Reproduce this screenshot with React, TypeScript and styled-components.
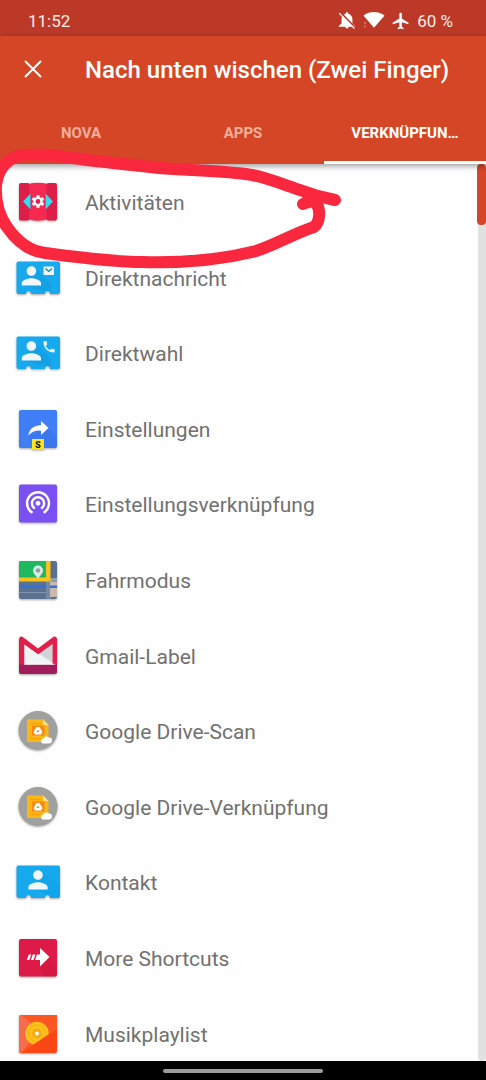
import React from "react";
import styled, { createGlobalStyle } from "styled-components";

const GlobalStyle = createGlobalStyle`
  *, *::before, *::after { box-sizing: border-box; }
  body { margin: 0; background: #fff; font-family: Roboto, "Noto Sans", sans-serif; }
  button { font: inherit; border: 0; margin: 0; padding: 0; background: none; cursor: pointer; }
`;

const Screen = styled.div`
  position: relative;
  display: flex;
  flex-direction: column;
  height: 100vh;
  overflow: hidden;
  background: #fefefe;
`;

const StatusBar = styled.div`
  display: flex;
  align-items: center;
  justify-content: space-between;
  flex: none;
  height: 36px;
  padding: 6px 33px 0 28px;
  background: #bc3927;
  color: #fdeee9;
  font-size: 17px;
`;

const StatusIcons = styled.div`
  display: flex;
  align-items: center;
  gap: 6px;
`;

const AppBar = styled.header`
  position: relative;
  z-index: 1;
  flex: none;
  background: #d54626;
  color: #fff;
  box-shadow: 0 2px 6px rgba(0, 0, 0, 0.4);
`;

const TitleRow = styled.div`
  display: flex;
  align-items: center;
  height: 68px;
  padding-left: 21px;
  gap: 40px;
`;

const CloseButton = styled.button`
  display: flex;
  width: 24px;
  height: 24px;
  color: #fff;
`;

const Title = styled.h1`
  margin: 0;
  font-size: 24px;
  font-weight: 500;
  line-height: 28px;
  white-space: nowrap;
`;

const Tabs = styled.div`
  display: grid;
  grid-template-columns: repeat(3, 1fr);
`;

const Tab = styled.button<{ $active?: boolean }>`
  height: 60px;
  font-size: 15px;
  font-weight: 700;
  color: ${(p) => (p.$active ? "#fff" : "#f3b09c")};
  border-bottom: 3px solid ${(p) => (p.$active ? "#fff" : "transparent")};
`;

const Body = styled.main`
  display: grid;
  grid-template-columns: 1fr 9px;
  flex: 1;
  min-height: 0;
  overflow: hidden;
`;

const List = styled.ul`
  list-style: none;
  margin: 0;
  padding: 0;
  min-height: 0;
`;

const Item = styled.li`
  height: 76px;
  &:nth-child(5n + 2), &:nth-child(5n + 4) { height: 75px; }
`;

const ItemButton = styled.button`
  display: flex;
  align-items: center;
  gap: 23px;
  width: 100%;
  height: 100%;
  padding-left: 14px;
  color: #717171;
  font-size: 21px;
  line-height: 26px;
  text-align: left;
`;

const ItemLabel = styled.span`
  padding-top: 2px;
`;

const IconSvg = styled.svg`
  flex: none;
  overflow: visible;
  filter: drop-shadow(0 1px 1px rgba(0, 0, 0, 0.35));
`;

const Track = styled.div`
  height: 100%;
  border-left: 1px solid #fefefe;
  border-radius: 0 0 4px 4px;
  background: #e1e1e1;
`;

const Thumb = styled.div`
  height: 61px;
  margin-left: -1px;
  border-radius: 4px;
  background: #d54626;
`;

const NavBar = styled.footer`
  display: flex;
  justify-content: center;
  align-items: center;
  flex: none;
  height: 19px;
  background: #000;
`;

const HomeHandle = styled.div`
  width: 33%;
  height: 4px;
  border-radius: 2px;
  background: #9c9c9c;
`;

const Scribble = styled.svg`
  position: absolute;
  z-index: 2;
  top: 140px;
  left: 0;
  pointer-events: none;
`;

const PERSON =
  "M12 12c2.21 0 4-1.79 4-4s-1.79-4-4-4-4 1.79-4 4 1.79 4 4 4zm0 2c-2.67 0-8 1.34-8 4v2h16v-2c0-2.66-5.33-4-8-4z";
const PHONE =
  "M6.62 10.79c1.44 2.83 3.76 5.14 6.59 6.59l2.2-2.2c.27-.27.67-.36 1.02-.24 1.12.37 2.33.57 3.57.57.55 0 1 .45 1 1V20c0 .55-.45 1-1 1-9.39 0-17-7.61-17-17 0-.55.45-1 1-1h3.5c.55 0 1 .45 1 1 0 1.25.2 2.45.57 3.57.11.35.03.74-.25 1.02l-2.2 2.2z";
const TETHER =
  "M12 11c-1.1 0-2 .9-2 2s.9 2 2 2 2-.9 2-2-.9-2-2-2zm6 2c0-3.31-2.69-6-6-6s-6 2.69-6 6c0 2.22 1.21 4.15 3 5.19l1-1.74c-1.19-.7-2-1.97-2-3.45 0-2.21 1.79-4 4-4s4 1.79 4 4c0 1.48-.81 2.75-2 3.45l1 1.74c1.79-1.04 3-2.97 3-5.19zM12 3C6.48 3 2 7.48 2 13c0 3.7 2.01 6.92 4.99 8.65l1-1.73C5.61 18.53 4 15.96 4 13c0-4.42 3.58-8 8-8s8 3.58 8 8c0 2.96-1.61 5.53-4 6.92l1 1.73c2.99-1.73 5-4.95 5-8.65 0-5.52-4.48-10-10-10z";

function Icon({ children }: { children: React.ReactNode }) {
  return (
    <IconSvg width="48" height="48" viewBox="0 0 48 48" aria-hidden="true">
      {children}
    </IconSvg>
  );
}

function ActivitiesIcon() {
  return (
    <Icon>
      <path d="M14 6Q24 3.500 34 6V41Q24 44.500 14 41z" fill="#f62a50" />
      <path d="M7 5h6.500q2 0 2 2V15l2 3v12l-2 3v7.500q0 2-2 2H7q-2 0-2-2V7q0-2 2-2z" fill="#dc1e48" />
      <path d="M41 5h-6.500q-2 0-2 2V15l-2 3v12l2 3v7.500q0 2 2 2H41q2 0 2-2V7q0-2-2-2z" fill="#dc1e48" />
      <path d="M16.500 15.500L9 23.500l7.500 8z" fill="#33dcf5" />
      <path d="M31.500 15.500l7.500 8-7.500 8z" fill="#33dcf5" />
      <g stroke="#fff" strokeWidth="3.200">
        <path d="M24 17.200v12.600M18.500 20.300l11 6.400M29.500 20.300l-11 6.400" />
      </g>
      <circle cx="24" cy="23.500" r="3.500" fill="#e91e4c" stroke="#fff" strokeWidth="2.200" />
    </Icon>
  );
}

function CardIcon({ kind }: { kind: "mail" | "phone" | "plain" }) {
  return (
    <Icon>
      <path
        d="M4.500 7.500h39.500q2 0 2 2v28.500q0 2-2 2h-8q0-3-2.500-3t-2.500 3H17q0-3-2.500-3t-2.500 3H4.500q-2 0-2-2V9.500q0-2 2-2z"
        fill="#16a9ee"
      />
      {kind === "plain" ? (
        <>
          <path d="M28 13l18 16v8q0 3-2 3h-8l-1-3-1.500 0-13-5z" fill="#0d9be0" opacity=".3" />
          <g fill="#f1f6f9" transform="translate(9.600 7.400) scale(1.200)"><path d={PERSON} /></g>
        </>
      ) : (
        <>
          <path d="M21 14l16 16v7h-7L8 31z" fill="#0d93d6" opacity=".35" />
          <g fill="#f1f6f9" transform="translate(3 7.400) scale(1.200)"><path d={PERSON} /></g>
        </>
      )}
      {kind === "mail" && (
        <>
          <rect x="29.500" y="12.500" width="10.500" height="8.500" rx=".8" fill="#f1f6f9" />
          <path d="M31.500 14.500l3.300 2.800 3.300-2.800" fill="none" stroke="#1486c2" strokeWidth="1.300" />
        </>
      )}
      {kind === "phone" && (
        <g fill="#f1f6f9" transform="translate(27.600 10.400) scale(.62)"><path d={PHONE} /></g>
      )}
    </Icon>
  );
}

function SettingsIcon() {
  return (
    <Icon>
      <rect x="5" y="5" width="38" height="38" rx="2" fill="#3f7ef6" />
      <path d="M34 23.500L43 32v9q0 2-2 2H22l-8-12z" fill="#2f68dc" opacity=".3" />
      <path d="M27 16l7.500 7-7.500 7v-4.300q-8-.8-13 5.300 1.500-10.500 13-11z" fill="#fff" />
      <rect x="18" y="34" width="12" height="10.500" fill="#f8e71c" />
      <text x="24" y="42.500" textAnchor="middle" fontFamily="Roboto, sans-serif" fontSize="9" fontWeight="900" fill="#111">S</text>
    </Icon>
  );
}

function TetherIcon() {
  return (
    <Icon>
      <rect x="5" y="4.500" width="38" height="38" rx="2" fill="#7a50f2" />
      <g fill="#fff" transform="translate(9.400 7.400) scale(1.220)"><path d={TETHER} /></g>
    </Icon>
  );
}

function MapIcon() {
  return (
    <Icon>
      <clipPath id="map-clip"><rect x="5" y="5" width="38" height="38" rx="2" /></clipPath>
      <g clipPath="url(#map-clip)">
        <rect x="5" y="5" width="38" height="38" fill="#5a7190" />
        <rect x="5" y="5" width="27" height="17" fill="#20b860" />
        <rect x="32" y="25" width="5" height="18" fill="#7389a4" />
        <rect x="36" y="22" width="7" height="4" fill="#8d9db2" />
        <rect x="36" y="26" width="7" height="15" fill="#cbb9ad" />
        <rect x="5" y="29.500" width="27" height="2.500" fill="#2f6fe0" />
        <rect x="36" y="29.500" width="7" height="2.500" fill="#2f6fe0" />
        <rect x="5" y="36" width="27" height="1" fill="#7e93ad" />
        <path d="M32 5h4.500v20.500H5v-4h27z" fill="#fcc21b" />
      </g>
      <path d="M24 9.500a5 5 0 0 1 5 5c0 3.500-3.500 5-5 8.500-1.500-3.500-5-5-5-8.500a5 5 0 0 1 5-5z" fill="#dfeae8" />
      <circle cx="24" cy="14.500" r="2.200" fill="#8aa39f" />
    </Icon>
  );
}

function GmailIcon() {
  return (
    <Icon>
      <path d="M9 10l15 11 15-11v24H9z" fill="#eceff1" />
      <path d="M24 21l14-10.500v19.500z" fill="#cfd4d8" />
      <path d="M5 7.500q0-3 3-3l16 12 16-12q3 0 3 3V34H38.500V12L24 22.500 10.500 12.500V34H5z" fill="#e01f4a" />
      <path d="M10.500 13v20h29z" fill="#f1f3f4" />
      <path d="M5 32.500h38v7.500q0 2-2 2H7q-2 0-2-2z" fill="#a01c5b" />
      <path d="M10.500 31.500h29l2 1.500H10.500z" fill="#fff" opacity=".6" />
    </Icon>
  );
}

function DriveIcon() {
  return (
    <Icon>
      <circle cx="24" cy="23.500" r="19.500" fill="#a0a09f" />
      <path d="M14 12.500h15l5.500 5.500v17H14q-1 0-1-1V13.500q0-1 1-1z" fill="#fbb716" />
      <path d="M29 12.500l5.500 5.500H29z" fill="#fde08a" />
      <path d="M16 16.500h11M16 31.500h11" stroke="#f6a40b" strokeWidth="1.500" />
      <rect x="18" y="18.500" width="12.500" height="10" fill="#f58a12" />
      <path d="M22.500 20h3l3 5-1.500 2.500h-6L19.500 25z" fill="#fff" />
      <path d="M24 22.500l1.500 2.500h-3z" fill="#f58a12" />
      <path d="M29.500 36.500a2.500 2.500 0 0 1 0-5 3.300 3.300 0 0 1 5.500-1 3 3 0 0 1 0 6z" fill="#fff" />
    </Icon>
  );
}

function MoreIcon() {
  return (
    <Icon>
      <rect x="5" y="5" width="38" height="37.500" rx="2" fill="#de1b48" />
      <path d="M35 23l8 8v9q0 2.500-2 2.500H30l-4-11z" fill="#c2153f" opacity=".3" />
      <path d="M26 14l9.500 9-9.500 9.500v-6.500h-5l2-5.500h3zM18.800 20.500h2.700l-2 5.500h-2.700zM14.800 20.500h2.500l-2 5.500h-2.500z" fill="#fff" />
    </Icon>
  );
}

function MusicIcon() {
  return (
    <Icon>
      <clipPath id="disc-clip"><path d="M5 5h38v13L35 24 8 42 5 42z" /></clipPath>
      <rect x="5" y="5" width="38" height="38" rx="2" fill="#fb4716" />
      <path d="M7 5l20 13-19 24.500Q5 43 5 41V7q0-2 2-2z" fill="#f76b4a" />
      <path d="M43 5v14L8 42.500 26 20 7 5z" fill="#fc5722" />
      <g clipPath="url(#disc-clip)">
        <circle cx="23" cy="23.500" r="11.800" fill="#fcc21b" />
        <circle cx="23" cy="23.500" r="8.500" fill="none" stroke="#f7a912" strokeWidth="1" />
        <circle cx="23" cy="23.500" r="5" fill="#f7a912" />
      </g>
      <circle cx="23" cy="23.500" r="2" fill="#fff" />
    </Icon>
  );
}

const ITEMS: { label: string; icon: React.ReactNode }[] = [
  { label: "Aktivitäten", icon: <ActivitiesIcon /> },
  { label: "Direktnachricht", icon: <CardIcon kind="mail" /> },
  { label: "Direktwahl", icon: <CardIcon kind="phone" /> },
  { label: "Einstellungen", icon: <SettingsIcon /> },
  { label: "Einstellungsverknüpfung", icon: <TetherIcon /> },
  { label: "Fahrmodus", icon: <MapIcon /> },
  { label: "Gmail-Label", icon: <GmailIcon /> },
  { label: "Google Drive-Scan", icon: <DriveIcon /> },
  { label: "Google Drive-Verknüpfung", icon: <DriveIcon /> },
  { label: "Kontakt", icon: <CardIcon kind="plain" /> },
  { label: "More Shortcuts", icon: <MoreIcon /> },
  { label: "Musikplaylist", icon: <MusicIcon /> },
];

export default function App() {
  return (
    <Screen>
      <GlobalStyle />
      <StatusBar>
        <span>11:52</span>
        <StatusIcons>
          <svg width="20" height="20" viewBox="0 0 24 24" aria-hidden="true">
            <path fill="#fff" d="M12 21c1.100 0 2-.9 2-2h-4c0 1.100.89 2 2 2zm6.500-6v-5c0-3.400-1.900-6-5-6.700V3c0-.83-.67-1.500-1.500-1.500s-1.500.67-1.500 1.500v.3C7.400 4 5.500 6.600 5.500 10v5l-3.500 3v1h20v-1z" />
            <path d="M4.500 2l18 18.500" stroke="#bc3927" strokeWidth="2" />
            <path d="M2.500 2.500l18.500 18.500" stroke="#fff" strokeWidth="1.400" />
          </svg>
          <svg width="22" height="20" viewBox="0 0 24 22" aria-hidden="true">
            <path fill="#fff" d="M12.010 18.500L23.640 5c-.45-.34-4.930-4-11.640-4C5.280 1 .81 4.660.36 5l11.650 13.500z" />
            <path d="M2 12v2M2 16v2" stroke="#dc7a69" strokeWidth="2" />
          </svg>
          <svg width="20" height="20" viewBox="0 0 24 24" aria-hidden="true">
            <path fill="#fff" d="M21 16v-2l-8-5V3.500c0-.83-.67-1.500-1.500-1.500S10 2.670 10 3.500V9l-8 5v2l8-2.500V19l-2 1.500V22l3.500-1 3.500 1v-1.500L13 19v-5.500l8 2.500z" />
          </svg>
          <span>60 %</span>
        </StatusIcons>
      </StatusBar>
      <AppBar>
        <TitleRow>
          <CloseButton aria-label="Schließen">
            <svg width="24" height="24" viewBox="0 0 24 24" aria-hidden="true">
              <path d="M4 3l16 16M20 3L4 19" stroke="currentColor" strokeWidth="2" />
            </svg>
          </CloseButton>
          <Title>Nach unten wischen (Zwei Finger)</Title>
        </TitleRow>
        <Tabs role="tablist">
          <Tab role="tab" aria-selected={false}>NOVA</Tab>
          <Tab role="tab" aria-selected={false}>APPS</Tab>
          <Tab role="tab" aria-selected $active>VERKNÜPFUN…</Tab>
        </Tabs>
      </AppBar>
      <Body>
        <List>
          {ITEMS.map((item) => (
            <Item key={item.label}>
              <ItemButton>
                {item.icon}
                <ItemLabel>{item.label}</ItemLabel>
              </ItemButton>
            </Item>
          ))}
        </List>
        <Track>
          <Thumb />
        </Track>
      </Body>
      <NavBar>
        <HomeHandle />
      </NavBar>
      <Scribble width="350" height="140" viewBox="0 140 350 140" aria-hidden="true">
        <path
          d="M335 200C325 198 313 195 300 190C285 185 268 178 252 175C220 170 185 171 150 167C122 164 92 161 66 157C50 155 32 153 18 156C6 160-2 170-4 185C-5 202-1 216 7 227C16 240 28 251 45 253C75 257 110 262 143 262C180 263 220 260 256 251C275 245 295 233 314 227C320 222 321 210 316 203C312 200 308 202 303 204"
          fill="none"
          stroke="#f9283f"
          strokeWidth="12"
          strokeLinecap="round"
          strokeLinejoin="round"
        />
      </Scribble>
    </Screen>
  );
}
